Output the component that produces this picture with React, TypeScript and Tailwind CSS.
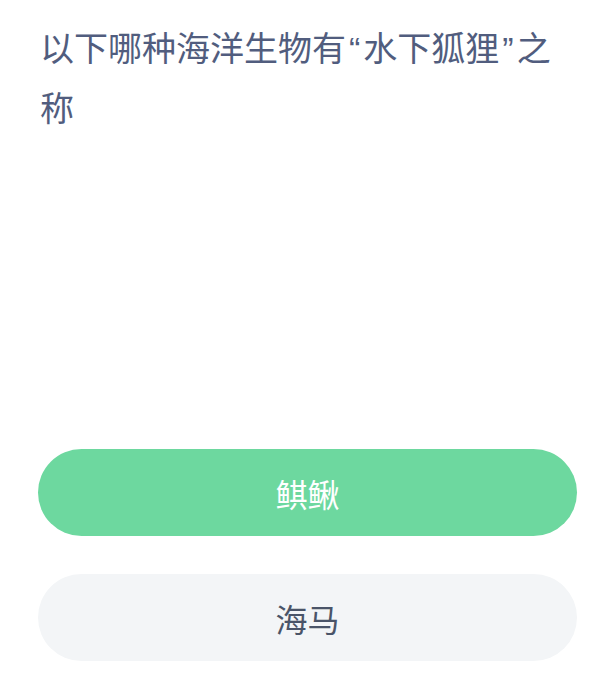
export default function App() {
  const font = { fontFamily: '"Noto Sans CJK SC", "Noto Sans", sans-serif' };
  return (
    <div className="flex h-[674px] w-full flex-col bg-white pl-[38px] pr-[30px] pt-[18px]" style={font}>
      {/* Question */}
      <h1 className="pl-[2px] pr-[10px] text-[34px] font-normal leading-[58px] text-[#515d7e]">
        以下哪种海洋生物有<span className="px-[3px] font-['Liberation_Sans']">“</span>水下狐狸
        <span className="px-[3px] font-['Liberation_Sans']">”</span>之称
      </h1>

      {/* Options */}
      <div className="mt-auto mb-[13px] flex flex-col gap-[38px]">
        <button className="flex h-[87px] w-full items-center justify-center rounded-full bg-[#6dd89f] text-[32px] text-white">
          鲯鳅
        </button>
        <button className="flex h-[87px] w-full items-center justify-center rounded-full bg-[#f3f5f7] text-[32px] text-[#4a5468]">
          海马
        </button>
      </div>
    </div>
  );
}
